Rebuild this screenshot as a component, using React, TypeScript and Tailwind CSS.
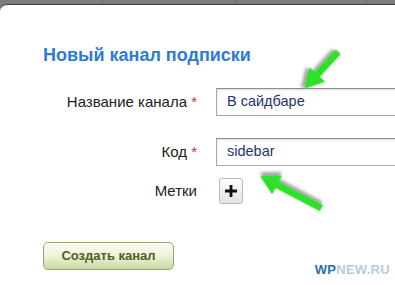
import React from "react";

function Arrow({ x, y, angle, len }: { x: number; y: number; angle: number; len: number }) {
  const h = 18;
  const w = 10;
  const s = 3;
  const d = `M0,${-s} L${len - h},${-s} L${len - h},${-w} L${len},0 L${len - h},${w} L${len - h},${s} L0,${s} Z`;
  return (
    <g transform={`translate(${x},${y}) rotate(${angle})`}>
      <path d={d} fill="#2fe02a" filter="url(#sh)" strokeLinejoin="round" stroke="#2fe02a" strokeWidth="1" />
    </g>
  );
}

export default function App() {
  return (
    <div
      className="relative w-[395px] h-[285px] overflow-hidden bg-[#7a7a7a]"
      style={{ fontFamily: '"Liberation Sans", Arial, Helvetica, sans-serif' }}
    >
      <div className="flex h-[4px] bg-[#7d7d7d]">
        <div className="w-[103px] border-r border-[#6a6a6a]" />
        <div className="w-[134px] border-r border-[#6a6a6a]" />
        <div className="w-[130px] border-r border-[#6a6a6a]" />
        <div className="flex-1" />
      </div>
      <div className="h-[281px] bg-white rounded-tl-[7px] border-t border-[#3e3e3e] flex flex-col">
        <h1 className="pl-[43px] pt-[40px] text-[18px] leading-[20px] font-bold text-[#2d7bd4]">
          Новый канал подписки
        </h1>
        <div className="mt-[23px] grid grid-cols-[197px_1fr] gap-x-[19px] items-center">
          <div className="text-right text-[15px] text-[#222]">
            Название канала <span className="text-[#c0392b]">*</span>
          </div>
          <div className="h-[28px] w-[220px] border border-[#a9a9a9] border-t-[#8f8f8f] shadow-[inset_0_1px_2px_rgba(0,0,0,0.15)] flex items-center pl-[10px] text-[14.5px] text-[#23356f]">
            В сайдбаре
          </div>
          <div className="mt-[22px] text-right text-[15px] text-[#222]">
            Код <span className="text-[#c0392b]">*</span>
          </div>
          <div className="mt-[22px] h-[28px] w-[220px] border border-[#a9a9a9] border-t-[#8f8f8f] shadow-[inset_0_1px_2px_rgba(0,0,0,0.15)] flex items-center pl-[10px] text-[14.5px] text-[#23356f]">
            sidebar
          </div>
          <div className="mt-[12px] text-right text-[15px] text-[#222]">Метки</div>
          <div className="mt-[12px] pl-[3px]">
            <div className="w-[24px] h-[26px] rounded-[3px] border border-[#b9b9b9] bg-gradient-to-b from-white to-[#e4e4e4] flex items-center justify-center">
              <svg width="12" height="12" viewBox="0 0 12 12">
                <path d="M4.6 0h2.8v4.6H12v2.8H7.4V12H4.6V7.4H0V4.6h4.6z" fill="#111" />
              </svg>
            </div>
          </div>
        </div>
        <div className="pl-[43px] mt-[38px]">
          <div className="w-[131px] h-[28px] rounded-[5px] border border-[#9ba66c] bg-gradient-to-b from-[#fbfcf3] via-[#eef3d9] to-[#c8d8a0] flex items-center justify-center text-[13px] font-bold text-[#4f6124]">
            Создать канал
          </div>
        </div>
        <div className="ml-auto mr-[5px] -mt-[7px] text-[13px] font-bold tracking-[0.3px] leading-none">
          <span className="text-[#2f6ea6]">WP</span>
          <span className="text-[#b3cde0]">NEW.RU</span>
        </div>
      </div>
      <svg className="absolute left-0 top-0 pointer-events-none" width="395" height="285">
        <defs>
          <filter id="sh" x="-30%" y="-30%" width="160%" height="160%">
            <feDropShadow dx="2" dy="3" stdDeviation="1.8" floodColor="#555" floodOpacity="0.55" />
          </filter>
        </defs>
        <Arrow x={338} y={52} angle={132.5} len={49} />
        <Arrow x={321} y={208} angle={207.7} len={68} />
      </svg>
    </div>
  );
}
